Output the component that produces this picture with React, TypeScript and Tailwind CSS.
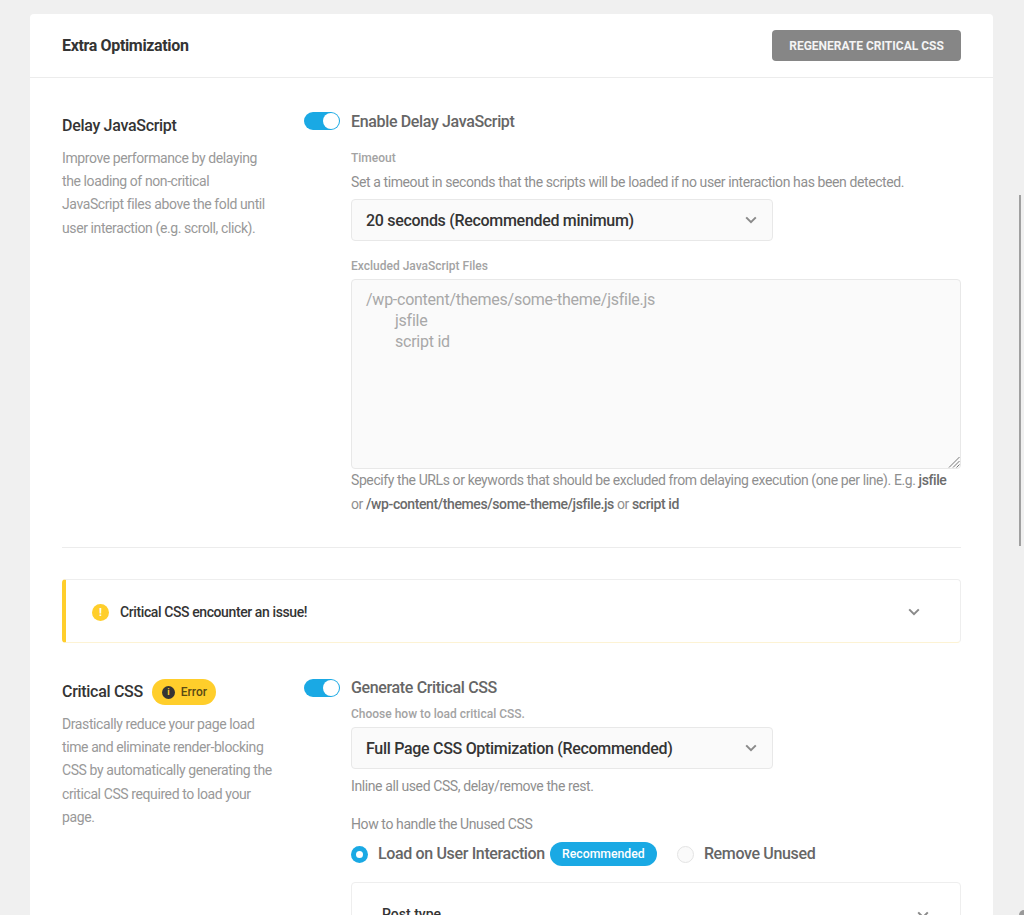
import React from "react";

const font = "font-['Roboto',sans-serif]";

function Toggle() {
  return (
    <div className="flex h-[18px] w-9 shrink-0 items-center justify-end rounded-full bg-[#1aa9e4] pr-px">
      <div className="h-4 w-4 rounded-full bg-white" />
    </div>
  );
}

function Chevron({ className }: { className?: string }) {
  return (
    <svg width="12" height="8" viewBox="0 0 12 8" fill="none" className={className}>
      <path d="M1.2 1.4 6 6.2l4.8-4.8" stroke="#8a8a8a" strokeWidth="2" />
    </svg>
  );
}

function Select({ label }: { label: string }) {
  return (
    <div className="flex h-[42px] w-[422px] items-center justify-between rounded border border-[#e8e8e8] bg-[#fafafa] pl-[14px] pr-[15px]">
      <span className="mt-[2px] text-base font-medium leading-none tracking-[-0.3px] text-[#343434]">{label}</span>
      <Chevron />
    </div>
  );
}

export default function App() {
  return (
    <div className={`relative h-[915px] overflow-hidden bg-[#f0f0f0] pl-[30px] pr-[31px] pt-[14px] ${font}`}>
      <div className="h-[901px] overflow-hidden rounded-t bg-white">
        <div className="flex h-[64px] items-center justify-between border-b border-[#ececec] pl-8 pr-8">
          <h2 className="text-base font-bold tracking-[-0.35px] text-[#343434]">Extra Optimization</h2>
          <button className="flex h-[31px] w-[189px] items-center justify-center rounded bg-[#868686] text-xs font-bold text-[#f4f4f4]">
            REGENERATE CRITICAL CSS
          </button>
        </div>

        <div className="px-8">
          <div className="flex pt-[33px]">
            <div className="w-[242px] shrink-0">
              <h3 className="mt-[4px] text-base font-medium leading-[22px] tracking-[-0.3px] text-[#343434]">Delay JavaScript</h3>
              <p className="mt-[10px] w-[211px] text-sm leading-[23.2px] tracking-[-0.4px] text-[#999999]">
                Improve performance by delaying the loading of non-critical JavaScript files above the fold until user interaction (e.g. scroll, click).
              </p>
            </div>
            <div className="min-w-0 flex-1 pt-px">
              <div className="flex items-start gap-[11px]">
                <Toggle />
                <span className="-mt-px text-base font-medium leading-[22px] tracking-[-0.35px] text-[#666666]">Enable Delay JavaScript</span>
              </div>
              <div className="ml-[47px]">
                <div className="mt-[17px] text-xs font-medium leading-4 text-[#a3a3a3]">Timeout</div>
                <p className="mt-[6px] text-sm leading-5 tracking-[-0.4px] text-[#8f8f8f]">
                  Set a timeout in seconds that the scripts will be loaded if no user interaction has been detected.
                </p>
                <div className="mt-[7px]">
                  <Select label="20 seconds (Recommended minimum)" />
                </div>
                <div className="mt-[17px] text-xs font-medium leading-4 text-[#a3a3a3]">Excluded JavaScript Files</div>
                <div className="relative mt-[5px] h-[190px] rounded border border-[#e8e8e8] bg-[#fafafa] px-[14px] pt-[9px] text-base leading-[21px] tracking-[-0.25px] text-[#a8a8a8]">
                  <div>/wp-content/themes/some-theme/jsfile.js</div>
                  <div className="pl-[29px]">jsfile</div>
                  <div className="pl-[29px]">script id</div>
                  <svg width="12" height="12" viewBox="0 0 12 12" className="absolute bottom-0 right-0">
                    <path d="M11.5 1 1 11.5M11.5 5 5 11.5M11.5 8.5 8.5 11.5" stroke="#777" strokeWidth="1" />
                  </svg>
                </div>
                <p className="-mt-px text-sm leading-6 tracking-[-0.4px] text-[#8f8f8f]">
                  Specify the URLs or keywords that should be excluded from delaying execution (one per line). E.g. <strong className="font-medium text-[#6b6b6b]">jsfile</strong> or <strong className="font-medium text-[#6b6b6b]">/wp-content/themes/some-theme/jsfile.js</strong> or <strong className="font-medium text-[#6b6b6b]">script id</strong>
                </p>
              </div>
            </div>
          </div>

          <div className="mt-[31px] border-t border-[#ececec]" />

          <div className="mt-[31px] flex h-[64px] items-center justify-between rounded border border-l-4 border-[#eeeeee] border-b-[#fdf3d4] border-l-[#ffce2b] pl-[26px] pr-10 pt-[2px]">
            <div className="flex items-center gap-[11px]">
              <div className="flex h-[17px] w-[17px] items-center justify-center rounded-full bg-[#ffce2b] text-[11px] font-bold leading-none text-white">!</div>
              <span className="text-sm font-medium tracking-[-0.4px] text-[#343434]">Critical CSS encounter an issue!</span>
            </div>
            <Chevron />
          </div>

          <div className="flex pt-[36px]">
            <div className="w-[242px] shrink-0">
              <div className="flex items-center gap-[9px]">
                <h3 className="text-base font-medium leading-[26px] tracking-[-0.3px] text-[#343434]">Critical CSS</h3>
                <span className="flex h-[26px] items-center gap-[6px] rounded-full bg-[#ffce2b] pl-[10px] pr-[9px] text-xs font-medium text-[#5a4a14]">
                  <span className="flex h-[13px] w-[13px] items-center justify-center rounded-full bg-[#343434] text-[9px] font-bold leading-none text-[#ffce2b]">i</span>
                  Error
                </span>
              </div>
              <p className="mt-[8px] w-[211px] text-sm leading-[23.2px] tracking-[-0.4px] text-[#999999]">
                Drastically reduce your page load time and eliminate render-blocking CSS by automatically generating the critical CSS required to load your page.
              </p>
            </div>
            <div className="min-w-0 flex-1">
              <div className="flex items-start gap-[11px]">
                <Toggle />
                <span className="-mt-0.5 text-base font-medium leading-[22px] tracking-[-0.35px] text-[#666666]">Generate Critical CSS</span>
              </div>
              <div className="ml-[47px]">
                <div className="mt-[7px] text-xs font-medium leading-4 text-[#a3a3a3]">Choose how to load critical CSS.</div>
                <div className="mt-[5px]">
                  <Select label="Full Page CSS Optimization (Recommended)" />
                </div>
                <p className="mt-[7px] text-sm leading-5 tracking-[-0.4px] text-[#8f8f8f]">Inline all used CSS, delay/remove the rest.</p>
                <p className="mt-[18px] text-sm leading-5 tracking-[-0.4px] text-[#8f8f8f]">How to handle the Unused CSS</p>
                <div className="mt-[8px] flex h-6 items-center">
                  <div className="flex h-[17px] w-[17px] items-center justify-center rounded-full bg-[#1aa9e4]">
                    <div className="h-[7px] w-[7px] rounded-full bg-white" />
                  </div>
                  <span className="ml-[10px] text-base font-medium tracking-[-0.35px] text-[#666666]">Load on User Interaction</span>
                  <span className="ml-[5px] flex h-6 w-[107px] items-center justify-center rounded-full bg-[#1aa9e4] text-[12.25px] font-medium text-white">Recommended</span>
                  <div className="ml-5 h-[17px] w-[17px] rounded-full border border-[#e4e4e4] bg-[#fafafa]" />
                  <span className="ml-[10px] text-base font-medium tracking-[-0.35px] text-[#666666]">Remove Unused</span>
                </div>
                <div className="mt-[16px] flex h-[80px] items-start justify-between rounded border border-[#eeeeee] pl-[30px] pr-[31px] pt-[21px]">
                  <span className="text-sm font-medium leading-5 text-[#343434]">Post type</span>
                  <Chevron className="mt-[7px]" />
                </div>
              </div>
            </div>
          </div>
        </div>
      </div>
      <div className="absolute right-[3px] top-[195px] h-[351px] w-[2px] bg-[#a0a0a0]" />
      <div className="absolute bottom-0 right-0 h-[5px] w-[5px] rounded-tl-[5px] bg-[#9a9a9a]" />
    </div>
  );
}
